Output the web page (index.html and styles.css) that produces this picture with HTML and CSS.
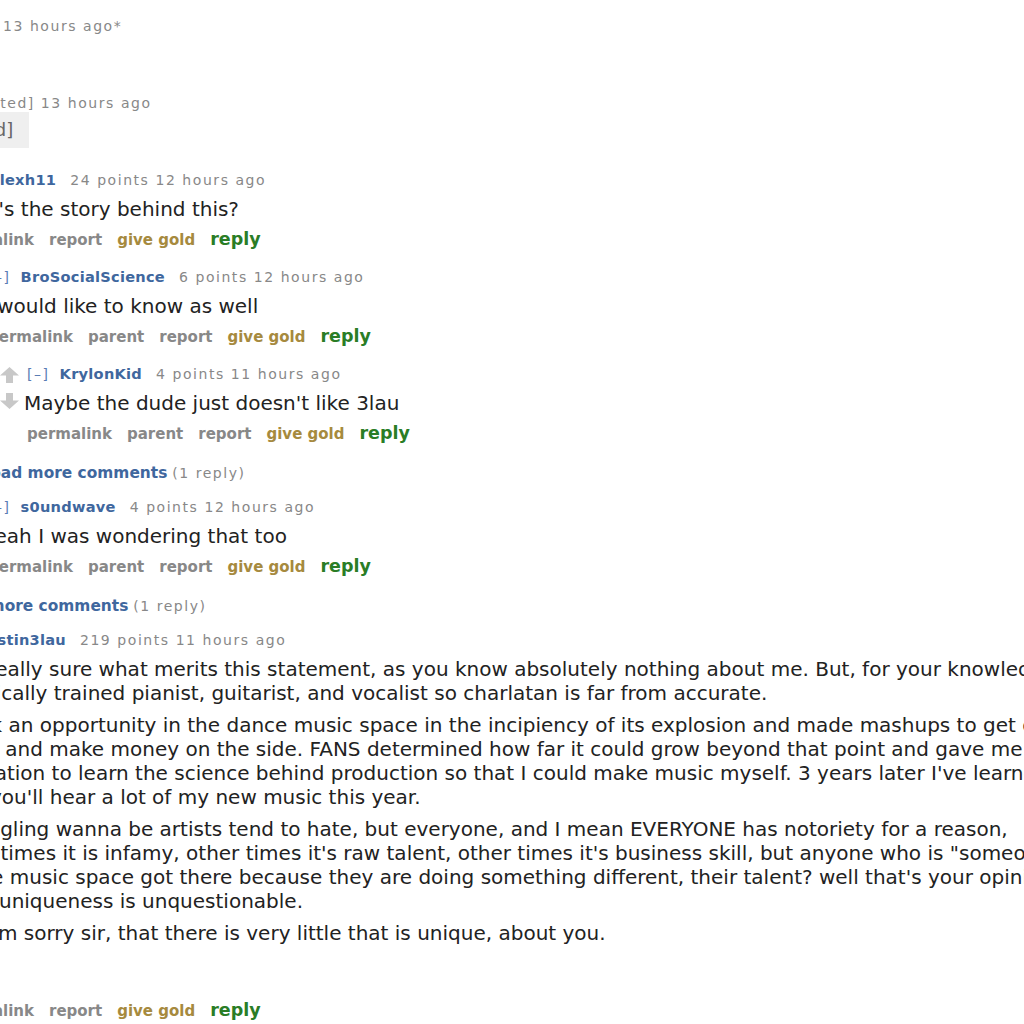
FILE: index.html
```html
<!DOCTYPE html>
<html lang="en">
<head>
<meta charset="utf-8">
<title>Comments</title>
<link rel="stylesheet" href="styles.css">
</head>
<body>
<div class="page">
  <p class="tagline stub">13 hours ago<span class="edited">*</span></p>

  <div class="deleted">
    <p class="tagline del-tag">[deleted] 13 hours ago</p>
    <div class="del-body"><span class="del-text">[deleted]</span></div>
  </div>

  <div class="thread">
    <div class="comment">
      <div class="midcol">
        <svg class="arrow" viewBox="0 0 19 16"><path d="M9.5 0 L19 8.5 H13 V16 H6 V8.5 H0 Z"/></svg>
        <svg class="arrow down" viewBox="0 0 19 16"><path d="M9.5 16 L19 7.5 H13 V0 H6 V7.5 H0 Z"/></svg>
      </div>
      <div class="entry">
        <p class="tagline"><span class="expand">[–]</span> <span class="author shifted">alexh11</span> <span class="score">24 points</span> 12 hours ago</p>
        <div class="md"><p>What's the story behind this?</p></div>
        <ul class="buttons"><li>permalink</li><li>report</li><li class="gold">give gold</li><li class="reply">reply</li></ul>

        <div class="child">
          <div class="comment">
            <div class="midcol">
              <svg class="arrow" viewBox="0 0 19 16"><path d="M9.5 0 L19 8.5 H13 V16 H6 V8.5 H0 Z"/></svg>
              <svg class="arrow down" viewBox="0 0 19 16"><path d="M9.5 16 L19 7.5 H13 V0 H6 V7.5 H0 Z"/></svg>
            </div>
            <div class="entry">
              <p class="tagline"><span class="expand">[–]</span> <span class="author">BroSocialScience</span> <span class="score">6 points</span> 12 hours ago</p>
              <div class="md"><p>I would like to know as well</p></div>
              <ul class="buttons"><li>permalink</li><li>parent</li><li>report</li><li class="gold">give gold</li><li class="reply">reply</li></ul>

              <div class="child">
                <div class="comment">
                  <div class="midcol">
                    <svg class="arrow" viewBox="0 0 19 16"><path d="M9.5 0 L19 8.5 H13 V16 H6 V8.5 H0 Z"/></svg>
                    <svg class="arrow down" viewBox="0 0 19 16"><path d="M9.5 16 L19 7.5 H13 V0 H6 V7.5 H0 Z"/></svg>
                  </div>
                  <div class="entry">
                    <p class="tagline"><span class="expand">[–]</span> <span class="author">KrylonKid</span> <span class="score">4 points</span> 11 hours ago</p>
                    <div class="md"><p>Maybe the dude just doesn't like 3lau</p></div>
                    <ul class="buttons"><li>permalink</li><li>parent</li><li>report</li><li class="gold">give gold</li><li class="reply">reply</li></ul>
                  </div>
                </div>
              </div>
            </div>
          </div>

          <div class="more"><span class="more-link">load more comments</span> <span class="count">(1 reply)</span></div>

          <div class="comment">
            <div class="midcol">
              <svg class="arrow" viewBox="0 0 19 16"><path d="M9.5 0 L19 8.5 H13 V16 H6 V8.5 H0 Z"/></svg>
              <svg class="arrow down" viewBox="0 0 19 16"><path d="M9.5 16 L19 7.5 H13 V0 H6 V7.5 H0 Z"/></svg>
            </div>
            <div class="entry">
              <p class="tagline"><span class="expand">[–]</span> <span class="author">s0undwave</span> <span class="score">4 points</span> 12 hours ago</p>
              <div class="md"><p>Yeah I was wondering that too</p></div>
              <ul class="buttons"><li>permalink</li><li>parent</li><li>report</li><li class="gold">give gold</li><li class="reply">reply</li></ul>
            </div>
          </div>
        </div>
      </div>
    </div>

    <div class="more"><span class="more-link">load more comments</span> <span class="count">(1 reply)</span></div>

    <div class="comment">
      <div class="midcol">
        <svg class="arrow" viewBox="0 0 19 16"><path d="M9.5 0 L19 8.5 H13 V16 H6 V8.5 H0 Z"/></svg>
        <svg class="arrow down" viewBox="0 0 19 16"><path d="M9.5 16 L19 7.5 H13 V0 H6 V7.5 H0 Z"/></svg>
      </div>
      <div class="entry">
        <p class="tagline"><span class="expand">[–]</span> <span class="author">justin3lau</span> <span class="score">219 points</span> 11 hours ago</p>
        <div class="md long">
          <p>Not really sure what merits this statement, as you know absolutely nothing about me. But, for your knowledge, I'm a<br>classically trained pianist, guitarist, and vocalist so charlatan is far from accurate.</p>
          <p>I took an opportunity in the dance music space in the incipiency of its explosion and made mashups to get our name out<br>there and make money on the side. FANS determined how far it could grow beyond that point and gave me the<br>education to learn the science behind production so that I could make music myself. 3 years later I've learned a lot,<br>and you'll hear a lot of my new music this year.</p>
          <p>Struggling wanna be artists tend to hate, but everyone, and I mean EVERYONE has notoriety for a reason,<br>sometimes it is infamy, other times it's raw talent, other times it's business skill, but anyone who is "someone"<br>in the music space got there because they are doing something different, their talent? well that's your opinion, but<br>their uniqueness is unquestionable.</p>
          <p>But I'm sorry sir, that there is very little that is unique, about you.</p>
        </div>
        <ul class="buttons"><li>permalink</li><li>report</li><li class="gold">give gold</li><li class="reply">reply</li></ul>
      </div>
    </div>
  </div>
</div>
</body>
</html>
```

FILE: styles.css
```css
html, body {
  margin: 0;
  padding: 0;
  overflow: hidden;
  background: #ffffff;
}

body {
  font-family: "DejaVu Sans", Verdana, sans-serif;
  color: #222222;
}

.page {
  padding-top: 16px;
  width: 1024px;
}

/* tagline */
.tagline {
  margin: 0;
  font-size: 14px;
  line-height: 20px;
  letter-spacing: 1.55px;
  color: #888888;
  white-space: nowrap;
}

.expand {
  color: #5a7db4;
  margin-right: 4px;
}

.author {
  font-weight: bold;
  font-size: 14.6px;
  letter-spacing: 0.25px;
  color: #3f679e;
  margin-right: 8px;
}

.author.shifted {
  margin-left: 8px;
}

.stub {
  margin-left: 3px;
}

/* deleted parent */
.deleted {
  margin-top: 57px;
}

.del-tag {
  margin-left: -43px;
}

.del-body {
  margin-top: -1px;
  height: 36px;
  display: flex;
}

.del-text {
  display: block;
  margin-left: -77px;
  padding: 0 16px 0 8px;
  background: #efefef;
  color: #666666;
  font-size: 18px;
  line-height: 36px;
}

/* thread */
.thread {
  margin-top: 22px;
  margin-left: -78px;
  width: 3000px;
}

.comment {
  display: flex;
}

.midcol {
  flex: none;
  width: 27px;
  padding-top: 3px;
  display: flex;
  flex-direction: column;
}

.arrow {
  display: block;
  width: 19px;
  height: 16px;
  fill: #c8c8c8;
}

.arrow.down {
  margin-top: 10px;
}

.entry {
  flex: 1;
  min-width: 0;
}

.md {
  margin: 7px 0 0 -3px;
}

.md p {
  margin: 0 0 8px;
  font-size: 20px;
  line-height: 24px;
  white-space: nowrap;
  color: #222222;
}

.md p:last-child {
  margin-bottom: 0;
}

.md.long {
  padding-bottom: 47px;
}

.buttons {
  display: flex;
  align-items: baseline;
  gap: 15px;
  list-style: none;
  margin: 8px 0 0;
  padding: 0;
  font-size: 15px;
  line-height: 22px;
  font-weight: bold;
  color: #888888;
  white-space: nowrap;
}

.buttons .gold {
  color: #a68a3e;
}

.buttons .reply {
  font-size: 17.5px;
  line-height: 20px;
  color: #2a7d26;
}

.child {
  margin-left: 12px;
}

.child > .comment:first-child {
  margin-top: 16px;
}

.more {
  margin-top: 18px;
  margin-left: 24px;
  font-size: 15.4px;
  line-height: 20px;
  white-space: nowrap;
}

.more-link {
  font-weight: bold;
  color: #3f679e;
}

.count {
  font-size: 14px;
  letter-spacing: 1.55px;
  color: #888888;
}

.more + .comment {
  margin-top: 14px;
}
```
